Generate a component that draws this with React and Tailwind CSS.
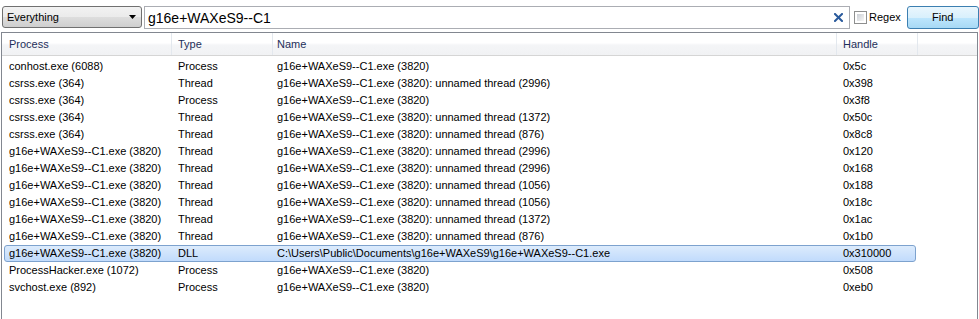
import React from 'react';

const EXE = 'g16e+WAXeS9--C1.exe (3820)';
const T = (n) => `${EXE}: unnamed thread (${n})`;

const rows = [
    ['conhost.exe (6088)', 'Process', EXE, '0x5c'],
    ['csrss.exe (364)', 'Thread', T(2996), '0x398'],
    ['csrss.exe (364)', 'Process', EXE, '0x3f8'],
    ['csrss.exe (364)', 'Thread', T(1372), '0x50c'],
    ['csrss.exe (364)', 'Thread', T(876), '0x8c8'],
    [EXE, 'Thread', T(2996), '0x120'],
    [EXE, 'Thread', T(2996), '0x168'],
    [EXE, 'Thread', T(1056), '0x188'],
    [EXE, 'Thread', T(1056), '0x18c'],
    [EXE, 'Thread', T(1372), '0x1ac'],
    [EXE, 'Thread', T(876), '0x1b0'],
    [EXE, 'DLL', 'C:\\Users\\Public\\Documents\\g16e+WAXeS9\\g16e+WAXeS9--C1.exe', '0x310000', true],
    ['ProcessHacker.exe (1072)', 'Process', EXE, '0x508'],
    ['svchost.exe (892)', 'Process', EXE, '0xeb0'],
];

function Toolbar() {
    return (
        <div className="flex items-start h-[32px] pt-[6px] pl-[2px]">
            {/* Scope dropdown */}
            <div className="w-[140px] h-[22px] border border-[#707070] rounded-[3px] flex items-center justify-between pl-[4px] pr-[5px] bg-[linear-gradient(180deg,#f2f2f2_0%,#ebebeb_50%,#dddddd_51%,#cfcfcf_100%)]">
                <span className="text-black">Everything</span>
                <svg width="7" height="4" viewBox="0 0 7 4"><path d="M0 0h7L3.5 4z" fill="#000" /></svg>
            </div>

            {/* Search box */}
            <div className="ml-[2px] w-[706px] h-[23px] border border-[#abadb3] flex items-center justify-between pl-[3px] pr-[6px]">
                <span className="text-[14px] text-black leading-none">g16e+WAXeS9--C1</span>
                <svg width="9" height="9" viewBox="0 0 9 9">
                    <path d="M1 1l7 7M8 1L1 8" stroke="#2a5a9c" strokeWidth="2" strokeLinecap="square" />
                </svg>
            </div>

            {/* Regex checkbox */}
            <div className="ml-[4px] mt-[5px] flex items-center">
                <div className="w-[13px] h-[13px] border border-[#8e8f8f] p-[2px] bg-white">
                    <div className="w-full h-full bg-[linear-gradient(135deg,#cbcfd5,#f6f6f6)]" />
                </div>
                <span className="ml-[2px] text-black leading-none">Regex</span>
            </div>

            {/* Find button */}
            <div className="ml-[6px] w-[72px] h-[23px] border border-[#3c7fb1] rounded-[3px] flex items-center justify-center text-black bg-[linear-gradient(180deg,#eaf6fd_0%,#d9f0fc_50%,#bee6fd_51%,#a7d9f5_100%)]">
                Find
            </div>
        </div>
    );
}

function Header() {
    const cols = [
        ['Process', 'w-[170px] pl-[7px]'],
        ['Type', 'w-[101px] pl-[6px]'],
        ['Name', 'w-[564px] pl-[4px]'],
        ['Handle', 'w-[81px] pl-[6px]'],
    ];
    return (
        <div className="flex h-[23px] border-b border-[#d5d5d5] bg-[linear-gradient(180deg,#ffffff_0%,#ffffff_45%,#f4f5f7_55%,#f1f2f4_100%)]">
            {cols.map(([label, cls]) => (
                <div key={label} className={`${cls} h-full border-r border-[#e3e8ee] flex items-center text-[#1e2f5a]`}>
                    {label}
                </div>
            ))}
            <div className="flex-1" />
        </div>
    );
}

function Row({ r }) {
    const [proc, type, name, handle, sel] = r;
    return (
        <div
            className={`ml-[2px] w-[912px] h-[17px] flex items-center leading-[15px] text-black border rounded-[3px] ${
                sel
                    ? 'border-[#7da2ce] bg-[linear-gradient(180deg,#dcebfc,#c1dbfc)]'
                    : 'border-transparent'
            }`}
        >
            <div className="w-[167px] pl-[4px] whitespace-nowrap">{proc}</div>
            <div className="w-[101px] pl-[6px] whitespace-nowrap">{type}</div>
            <div className="w-[564px] pl-[4px] whitespace-nowrap">{name}</div>
            <div className="flex-1 pl-[6px] whitespace-nowrap">{handle}</div>
        </div>
    );
}

export default function App() {
    return (
        <div className="w-[979px] h-[319px] bg-white overflow-hidden font-['Liberation_Sans',Arial,sans-serif] text-[11px]">
            <Toolbar />
            <div className="ml-[1px] w-[977px] h-[287px] border border-b-0 border-[#828790]">
                <Header />
                <div className="pt-[2px]">
                    {rows.map((r, i) => (
                        <Row key={i} r={r} />
                    ))}
                </div>
            </div>
        </div>
    );
}
